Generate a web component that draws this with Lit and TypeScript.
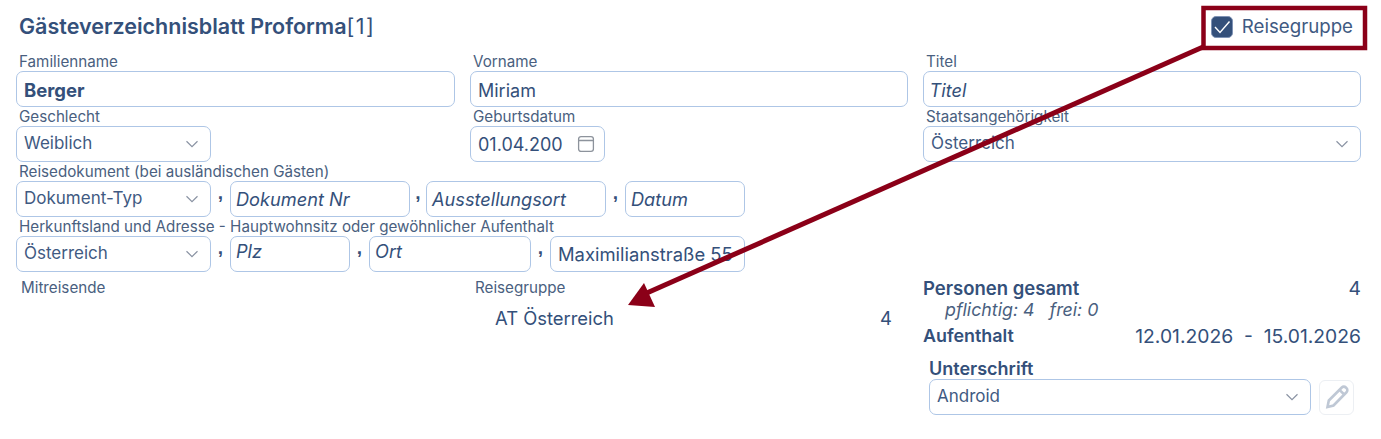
import { LitElement, html, css } from "lit";
import { customElement } from "lit/decorators.js";

const chevron = html`<svg class="chev" width="14" height="8" viewBox="0 0 14 8" fill="none" stroke="#8a93a3" stroke-width="1.2"><path d="M1.5 1.2 7 6.600 12.500 1.200"/></svg>`;
const sel = (t: string, cls = "w195") => html`<div class="box select ${cls}"><span class="seltext">${t}</span>${chevron}</div>`;
const inp = (t: string, cls: string) => html`<div class="box input ${cls}">${t}</div>`;
const comma = (cls = "") => html`<span class="comma ${cls}">,</span>`;

@customElement("app-root")
export class AppRoot extends LitElement {
  static styles = css`
    :host { display: block; position: relative; width: 1381px; height: 439px; overflow: hidden; background: #fff; color: #34507a; font-family: Inter, "Liberation Sans", sans-serif; }
    .page { padding: 13px 20px 0 16px; display: flex; flex-direction: column; }
    .head { display: flex; justify-content: space-between; align-items: flex-start; height: 39px; padding-left: 3px; }
    h1 { margin: 0; font-size: 21.500px; font-weight: 600; line-height: 26px; }
    h1 span { font-weight: 400; letter-spacing: 1.400px; }
    .check { display: flex; align-items: center; gap: 9px; font-size: 18.700px; color: #3f5a82; margin-right: 8px; margin-top: 2px; }
    .cb { width: 22px; height: 22px; background: #34507a; border-radius: 5px; border: 1px solid #7f93b5; box-sizing: border-box; display: flex; align-items: center; justify-content: center; }
    .grid, .bottom { display: grid; grid-template-columns: 439px 438px 438px; column-gap: 15px; }
    .cell { height: 55px; display: flex; flex-direction: column; min-width: 0; }
    .full { height: 55px; grid-column: 1 / -1; display: flex; flex-direction: column; }
    label { display: block; height: 19px; line-height: 19px; font-size: 15.200px; padding-left: 3px; color: #4a5f80; white-space: nowrap; }
    .line { display: flex; align-items: stretch; height: 36px; }
    .box { box-sizing: border-box; height: 36px; border: 1.500px solid #aec6e6; border-radius: 7px; background: #fff; display: flex; align-items: center; white-space: nowrap; overflow: hidden; }
    .input { font-size: 18px; padding: 0 5px; color: #34507a; }
    .grow { flex: 1; padding: 2px 0 0 7px; }
    .bold { font-weight: 700; font-size: 18.500px; }
    .it { font-style: italic; font-size: 18.200px; }
    .grow.it { padding-left: 5.500px; }
    .up { padding-bottom: 7px; }
    .street { padding-left: 7px; font-size: 18.400px; }
    .select { font-size: 17px; padding: 0 11px 0 7px; justify-content: space-between; color: #3f5a82; }
    .seltext { position: relative; top: -1px; }
    .w195 { width: 195px; }
    .w135 { width: 135px; }
    .w180 { width: 180px; }
    .w120 { width: 120px; }
    .w162 { width: 162px; }
    .grow2 { flex: 1; }
    .comma { width: 19px; text-align: center; font-family: "Liberation Sans", sans-serif; font-weight: 700; font-size: 19px; line-height: 24px; }
    .c17 { width: 16px; }
    .date { justify-content: space-between; padding: 0 9px 0 7px; }
    .bottom { padding-top: 6px; }
    .blabel { font-size: 15.200px; color: #4a5f80; line-height: 20px; padding-left: 5px; }
    .grp { display: flex; justify-content: space-between; font-size: 18.400px; padding: 9px 16px 0 25px; line-height: 22px; }
    .col3 { display: flex; flex-direction: column; margin-top: -1px; }
    .kv { display: flex; justify-content: space-between; line-height: 22px; }
    .kv b { font-size: 17.900px; font-weight: 600; }
    .kv b.wide { font-size: 18.500px; }
    .kv .val { font-size: 19.300px; }
    .note { font-style: italic; font-size: 17.800px; line-height: 22px; padding-left: 22px; margin-bottom: 4px; color: #4a5f80; }
    .sig { padding: 12px 7px 0 6px; }
    .sig-title { font-size: 18px; font-weight: 600; line-height: 20px; }
    .sig-row { display: flex; gap: 8px; align-items: center; }
    .sig-row .select { flex: 1; }
    .pen { box-sizing: border-box; width: 35px; height: 35px; border: 1.500px solid #eceff3; border-radius: 6px; display: flex; align-items: center; justify-content: center; }
    .overlay { position: absolute; inset: 0; pointer-events: none; }
  `;

  render() {
    return html`
      <div class="page">
        <div class="head">
          <h1>Gästeverzeichnisblatt Proforma<span>[1]</span></h1>
          <div class="check">
            <span class="cb"><svg width="18" height="14" viewBox="0 0 18 14" fill="none" stroke="#fff" stroke-width="1.400"><path d="M2 7 7 12.500 16.500 1.500"/></svg></span>
            <span>Reisegruppe</span>
          </div>
        </div>
        <div class="grid">
          <div class="cell"><label>Familienname</label><div class="box input grow bold">Berger</div></div>
          <div class="cell"><label>Vorname</label><div class="box input grow">Miriam</div></div>
          <div class="cell"><label>Titel</label><div class="box input grow it">Titel</div></div>

          <div class="cell"><label>Geschlecht</label>${sel("Weiblich")}</div>
          <div class="cell"><label>Geburtsdatum</label>
            <div class="box input w135 date"><span>01.04.200</span>
              <svg width="18" height="18" viewBox="0 0 18 18" fill="none" stroke="#8d939c" stroke-width="1.300"><rect x="1.600" y="1.600" width="14.800" height="14.800" rx="2.400"/><path d="M1.600 5.500h14.800"/></svg>
            </div>
          </div>
          <div class="cell"><label>Staatsangehörigkeit</label>${sel("Österreich", "grow2")}</div>

          <div class="full"><label>Reisedokument (bei ausländischen Gästen)</label>
            <div class="line">${sel("Dokument-Typ")}${comma()}${inp("Dokument Nr", "w180 it")}${comma("c17")}${inp("Ausstellungsort", "w180 it")}${comma()}${inp("Datum", "w120 it")}</div>
          </div>
          <div class="full"><label>Herkunftsland und Adresse - Hauptwohnsitz oder gewöhnlicher Aufenthalt</label>
            <div class="line">${sel("Österreich")}${comma()}${inp("Plz", "w120 it up")}${comma()}${inp("Ort", "w162 it up")}${comma()}${inp("Maximilianstraße 55", "w195 street")}</div>
          </div>
        </div>
        <div class="bottom">
          <div><div class="blabel">Mitreisende</div></div>
          <div><div class="blabel">Reisegruppe</div><div class="grp"><span>AT Österreich</span><span>4</span></div></div>
          <div class="col3">
            <div class="kv"><b class="wide">Personen gesamt</b><span class="val">4</span></div>
            <div class="note">pflichtig: 4 &nbsp; frei: 0</div>
            <div class="kv"><b>Aufenthalt</b><span class="val">12.01.2026 &nbsp;-&nbsp; 15.01.2026</span></div>
            <div class="sig">
              <div class="sig-title">Unterschrift</div>
              <div class="sig-row">${sel("Android", "grow2")}
                <span class="pen"><svg width="26" height="26" viewBox="0 0 26 26" fill="none" stroke="#bfc8d5" stroke-width="2.600"><path d="M3.500 23 4.800 16.500 17.800 3.500a2.800 2.800 0 0 1 4 0l.7.7a2.800 2.800 0 0 1 0 4L9.500 21.500z"/><path d="M15.500 5.800 20.200 10.500"/></svg></span>
              </div>
            </div>
          </div>
        </div>
      </div>
      <svg class="overlay" width="1381" height="439" viewBox="0 0 1381 439">
        <rect x="1203.500" y="8" width="161.500" height="40" fill="none" stroke="#8b0018" stroke-width="4.500"/>
        <path d="M1203 47 640 296" stroke="#8b0018" stroke-width="5" fill="none"/>
        <path d="M628 305 644 283 655 307z" fill="#8b0018"/>
      </svg>
    `;
  }
}
